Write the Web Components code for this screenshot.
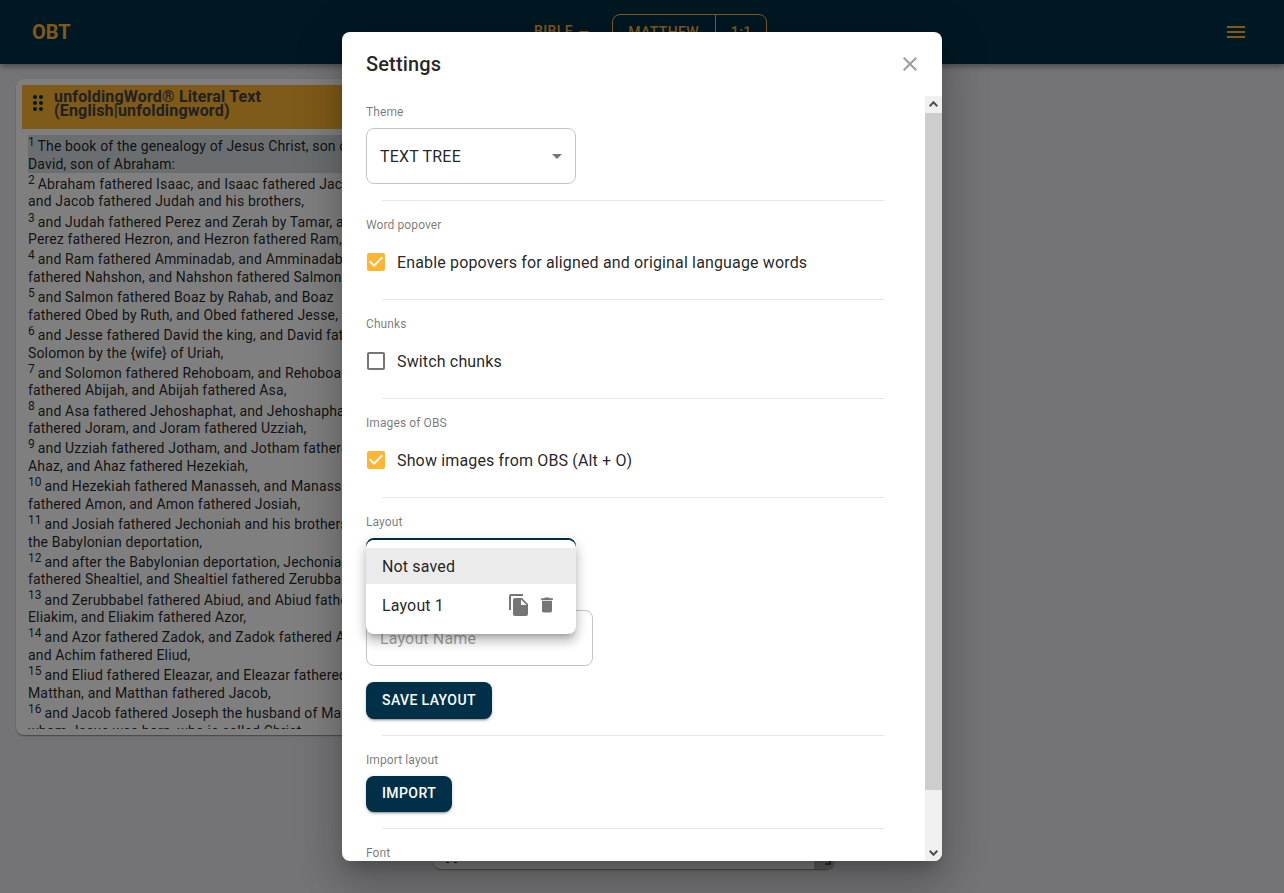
<!DOCTYPE html>
<html lang="en">
<head>
<meta charset="utf-8">
<title>OBT</title>
<style>
html,body{margin:0;height:100%;overflow:hidden}
body{background:#e9e9ed;font-family:Roboto,sans-serif;color:rgba(0,0,0,.87)}
</style>
</head>
<body>
<obt-app></obt-app>
<script>
const define = (name, html) => customElements.define(name, class extends HTMLElement {
  constructor(){
    super();
    const t = document.createElement('template');
    t.innerHTML = html;
    this.attachShadow({mode:'open'}).append(t.content.cloneNode(true));
  }
});

define('obt-header', `
<style>
:host{display:grid;grid-template-columns:502px 1fr auto;height:64px;box-sizing:border-box;padding:0 36px 0 32px;align-items:center;background:#003047;color:#ffb531;position:relative;box-shadow:0 2px 4px -1px rgba(0,0,0,.2),0 4px 5px rgba(0,0,0,.14),0 1px 10px rgba(0,0,0,.12)}
.logo{font:700 20px/32px Roboto,sans-serif;letter-spacing:0}
.nav{display:flex;align-items:center;font:500 14px/24.5px Roboto,sans-serif;letter-spacing:.4px}
.bible{display:flex;align-items:center;margin-right:16px;padding-bottom:1px}
.bible svg{margin:2px 0 0 -1px}
.group{display:flex;border:1px solid #ffb531;border-radius:8px;height:34px;align-items:center}
.group span{padding:5px 15px}
.group span:first-child{border-right:1px solid #ffb531;padding-right:16px}
.group span:last-child{padding:5px 14.8px}
svg{display:block}
</style>
<div class="logo">OBT</div>
<div class="nav"><span class="bible">BIBLE<svg width="24" height="24" viewBox="0 0 24 24" fill="currentColor"><path d="M7 10l5 5 5-5z"/></svg></span>
<div class="group"><span>MATTHEW</span><span>1:1</span></div></div>
<svg width="24" height="24" viewBox="0 0 24 24" fill="currentColor"><path d="M3 18h18v-2H3v2zm0-5h18v-2H3v2zm0-7v2h18V6H3z"/></svg>`);

define('bible-verse', `
<style>
:host{display:block;padding-top:2.8px;font-size:14px;line-height:17.5px;letter-spacing:.15px;white-space:nowrap}
:host([active]){background:#d5dce1}
sup{font-size:12px;line-height:0;vertical-align:5.2px;letter-spacing:0;margin-right:-.6px}
</style><sup><slot name="n"></slot></sup> <slot></slot>`);

define('resource-card', `
<style>
:host{display:block;box-sizing:border-box;width:400px;height:656px;margin:15px 0 0 16px;padding:6px;background:#fff;border-radius:8px;box-shadow:0 2px 1px -1px rgba(0,0,0,.2),0 1px 1px rgba(0,0,0,.14),0 1px 3px rgba(0,0,0,.12)}
.head{display:flex;height:44px;box-sizing:border-box;background:#ffb531;padding:5px 4px;gap:4px}
.head svg{flex:none;margin-top:1px;fill:#003047}
.title{font:700 16px/14px Roboto,sans-serif;letter-spacing:.17px;white-space:pre;color:#424242}
.body{margin:6px 6px 0;padding-top:.3px;box-sizing:border-box;height:594px;overflow:hidden}
</style>
<div class="head"><svg width="24" height="24" viewBox="0 0 24 24"><path d="M11 18c0 1.1-.9 2-2 2s-2-.9-2-2 .9-2 2-2 2 .9 2 2zm-2-8c-1.1 0-2 .9-2 2s.9 2 2 2 2-.9 2-2-.9-2-2-2zm0-6c-1.1 0-2 .9-2 2s.9 2 2 2 2-.9 2-2-.9-2-2-2zm6 4c1.1 0 2-.9 2-2s-.9-2-2-2-2 .9-2 2 .9 2 2 2zm0 2c-1.1 0-2 .9-2 2s.9 2 2 2 2-.9 2-2-.9-2-2-2zm0 6c-1.1 0-2 .9-2 2s.9 2 2 2 2-.9 2-2-.9-2-2-2z"/></svg><div class="title"><slot name="title"></slot></div></div>
<div class="body"><slot></slot></div>`);

define('settings-section', `
<style>
:host{display:block;padding-top:14px}
:host([first]){padding-top:6px}
.label{font-size:12px;line-height:20px;letter-spacing:.1px;color:rgba(0,0,0,.54);margin-bottom:6px}
.content{display:flex;flex-direction:column;align-items:flex-start;gap:16px}
hr{border:0;height:1px;background:#e6e6e6;margin:16px 16px 0}
</style>
<div class="label"><slot name="label"></slot></div><div class="content"><slot></slot></div><hr>`);

define('check-option', `
<style>
:host{display:flex;align-items:center;height:42px;margin-left:-2px;gap:9px;font-size:16px;line-height:24px;letter-spacing:.15px}
svg{fill:rgba(0,0,0,.54)}
span{padding-top:2px}
.on,:host([checked]) .off{display:none}
:host([checked]) .on{display:block;fill:#ffb531}
</style>
<svg class="off" width="24" height="24" viewBox="0 0 24 24"><path d="M19 5v14H5V5h14m0-2H5c-1.1 0-2 .9-2 2v14c0 1.1.9 2 2 2h14c1.1 0 2-.9 2-2V5c0-1.1-.9-2-2-2z"/></svg>
<svg class="on" width="24" height="24" viewBox="0 0 24 24"><path d="M19 3H5c-1.11 0-2 .9-2 2v14c0 1.1.89 2 2 2h14c1.11 0 2-.9 2-2V5c0-1.1-.89-2-2-2zm-9 14l-5-5 1.41-1.41L10 14.17l7.59-7.59L19 8l-9 9z"/></svg>
<span><slot></slot></span>`);

define('select-field', `
<style>
:host{display:flex;box-sizing:border-box;width:210px;height:56px;border:1px solid #c4c4c4;border-radius:8px;padding:0 6px 0 13px;align-items:center;justify-content:space-between;font-size:16px;letter-spacing:.2px}
:host([focused]){border:2px solid #003047}
svg{fill:rgba(0,0,0,.54)}
</style><span><slot></slot></span><svg width="24" height="24" viewBox="0 0 24 24"><path d="M7 10l5 5 5-5z"/></svg>`);

define('text-field', `
<style>
:host{display:flex;box-sizing:border-box;width:227px;height:56px;border:1px solid #c4c4c4;border-radius:8px;padding:0 13px;align-items:center;font-size:16px;letter-spacing:.15px;color:rgba(0,0,0,.38)}
</style><slot></slot>`);

define('solid-button', `
<style>
:host{display:block;box-sizing:border-box;height:36.5px;padding:5.7px 16px 6px;border-radius:8px;background:#003047;color:#fff;font-weight:500;font-size:14px;line-height:24.5px;letter-spacing:.4px;box-shadow:0 3px 1px -2px rgba(0,0,0,.2),0 2px 2px rgba(0,0,0,.14),0 1px 5px rgba(0,0,0,.12)}
:host([raised-text]){padding-top:5.2px}
</style><slot></slot>`);

define('scroll-bar', `
<style>
:host{display:flex;flex-direction:column;width:17px;background:#f0f0f0}
.thumb{height:677px;background:#cdcdcd}
svg{display:block;height:17px;width:17px;fill:none;stroke:#505050;stroke-width:2}
.gap{flex:1}
</style>
<svg viewBox="0 0 17 17"><path d="M4.7 10.2 8.5 6.2l3.8 4"/></svg><div class="thumb"></div><div class="gap"></div><svg viewBox="0 0 17 17"><path d="M4.7 6.8l3.8 4 3.8-4"/></svg>`);

define('layout-menu', `
<style>
:host{display:block;box-sizing:border-box;width:210px;padding:8px 0;background:#fff;border-radius:8px;font-size:16px;letter-spacing:.15px;box-shadow:0 5px 5px -3px rgba(0,0,0,.2),0 8px 10px 1px rgba(0,0,0,.14),0 3px 14px 2px rgba(0,0,0,.12)}
.item{display:flex;align-items:center;height:36px;padding:0 19px 0 16px}
.selected{background:#ebebeb}
.saved{height:42px}
.saved span{flex:1}
svg{fill:rgba(0,0,0,.54);margin-left:6px}
</style>
<div class="item selected">Not saved</div>
<div class="item saved"><span>Layout 1</span>
<svg width="24" height="24" viewBox="0 0 24 24"><path d="M16 1H4c-1.1 0-2 .9-2 2v14h2V3h12V1zm-1 4l6 6v10c0 1.1-.9 2-2 2H7.99C6.89 23 6 22.1 6 21l.01-14c0-1.1.89-2 1.99-2h7zm-1 7h5.5L14 6.5V12z"/></svg>
<svg width="20" height="20" viewBox="0 0 24 24"><path d="M6 19c0 1.1.9 2 2 2h8c1.1 0 2-.9 2-2V7H6v12zM19 4h-3.5l-1-1h-5l-1 1H5v2h14V4z"/></svg></div>`);

define('settings-dialog', `
<style>
:host{display:flex;flex-direction:column;width:600px;height:829px;background:#fff;border-radius:8px;overflow:hidden;box-shadow:0 11px 15px -7px rgba(0,0,0,.2),0 24px 38px 3px rgba(0,0,0,.14),0 9px 46px 8px rgba(0,0,0,.12)}
header{height:64px;box-sizing:border-box;padding:0 20px 0 24px;display:flex;align-items:center;justify-content:space-between;flex:none}
h2{margin:0;font:500 20px/32px Roboto,sans-serif;letter-spacing:.15px}
header svg{fill:#9e9e9e}
.main{display:flex;height:765px}
.content{flex:1;padding:0 24px;overflow:hidden}
</style>
<header><h2>Settings</h2><svg width="24" height="24" viewBox="0 0 24 24"><path d="M19 6.41L17.59 5 12 10.59 6.41 5 5 6.41 10.59 12 5 17.59 6.41 19 12 13.41 17.59 19 19 17.59 13.41 12z"/></svg></header>
<div class="main"><div class="content">
<settings-section first><span slot="label">Theme</span><select-field>TEXT TREE</select-field></settings-section>
<settings-section><span slot="label">Word popover</span><check-option checked>Enable popovers for aligned and original language words</check-option></settings-section>
<settings-section><span slot="label">Chunks</span><check-option>Switch chunks</check-option></settings-section>
<settings-section><span slot="label">Images of OBS</span><check-option checked>Show images from OBS (Alt + O)</check-option></settings-section>
<settings-section><span slot="label">Layout</span><select-field focused></select-field><text-field>Layout Name</text-field><solid-button>SAVE LAYOUT</solid-button></settings-section>
<settings-section><span slot="label">Import layout</span><solid-button raised-text>IMPORT</solid-button></settings-section>
<settings-section><span slot="label">Font</span></settings-section>
</div><scroll-bar></scroll-bar></div>`);

const verses = [
['The book of the genealogy of Jesus Christ, son of','David, son of Abraham:'],
['Abraham fathered Isaac, and Isaac fathered Jacob,','and Jacob fathered Judah and his brothers,'],
['and Judah fathered Perez and Zerah by Tamar, and','Perez fathered Hezron, and Hezron fathered Ram,'],
['and Ram fathered Amminadab, and Amminadab','fathered Nahshon, and Nahshon fathered Salmon,'],
['and Salmon fathered Boaz by Rahab, and Boaz','fathered Obed by Ruth, and Obed fathered Jesse,'],
['and Jesse fathered David the king, and David fathered','Solomon by the {wife} of Uriah,'],
['and Solomon fathered Rehoboam, and Rehoboam','fathered Abijah, and Abijah fathered Asa,'],
['and Asa fathered Jehoshaphat, and Jehoshaphat','fathered Joram, and Joram fathered Uzziah,'],
['and Uzziah fathered Jotham, and Jotham fathered','Ahaz, and Ahaz fathered Hezekiah,'],
['and Hezekiah fathered Manasseh, and Manasseh','fathered Amon, and Amon fathered Josiah,'],
['and Josiah fathered Jechoniah and his brothers at','the Babylonian deportation,'],
['and after the Babylonian deportation, Jechoniah','fathered Shealtiel, and Shealtiel fathered Zerubbabel,'],
['and Zerubbabel fathered Abiud, and Abiud fathered','Eliakim, and Eliakim fathered Azor,'],
['and Azor fathered Zadok, and Zadok fathered Achim,','and Achim fathered Eliud,'],
['and Eliud fathered Eleazar, and Eleazar fathered','Matthan, and Matthan fathered Jacob,'],
['and Jacob fathered Joseph the husband of Mary, by','whom Jesus was born, who is called Christ.']];

define('obt-app', `
<style>
:host{display:block;height:893px;position:relative;overflow:hidden}
.lower{position:absolute;left:433px;top:600px;width:401px;height:269px;background:#fff;border-radius:8px;box-shadow:0 2px 1px -1px rgba(0,0,0,.2),0 1px 1px rgba(0,0,0,.14),0 1px 3px rgba(0,0,0,.12);display:flex;align-items:flex-end;justify-content:space-between}
.lower i{width:11px;height:1px;margin:0 0 6px 13px;background:linear-gradient(90deg,#333 3px,transparent 3px 8px,#333 8px)}
.grip{width:20px;height:20px;box-sizing:border-box;background:#bbb;border-bottom-right-radius:3px;padding:0 3px 4px 0;display:flex;align-items:flex-end;justify-content:flex-end}
.grip b{width:6px;height:6px;border:solid #555;border-width:0 2px 2px 0;box-sizing:border-box}
.backdrop{position:absolute;inset:0;background:rgba(0,0,0,.5)}
settings-dialog{position:absolute;left:342px;top:32px}
layout-menu{position:absolute;left:366px;top:540px}
</style>
<obt-header></obt-header>
<resource-card><span slot="title">unfoldingWord® Literal Text
(English|unfoldingword)</span>${verses.map((v,i)=>`<bible-verse${i?'':' active'}><span slot="n">${i+1}</span>${v[0]}<br>${v[1]}</bible-verse>`).join('')}</resource-card>
<div class="lower"><i></i><div class="grip"><b></b></div></div>
<div class="backdrop"></div>
<settings-dialog></settings-dialog>
<layout-menu></layout-menu>`);
</script>
</body>
</html>
